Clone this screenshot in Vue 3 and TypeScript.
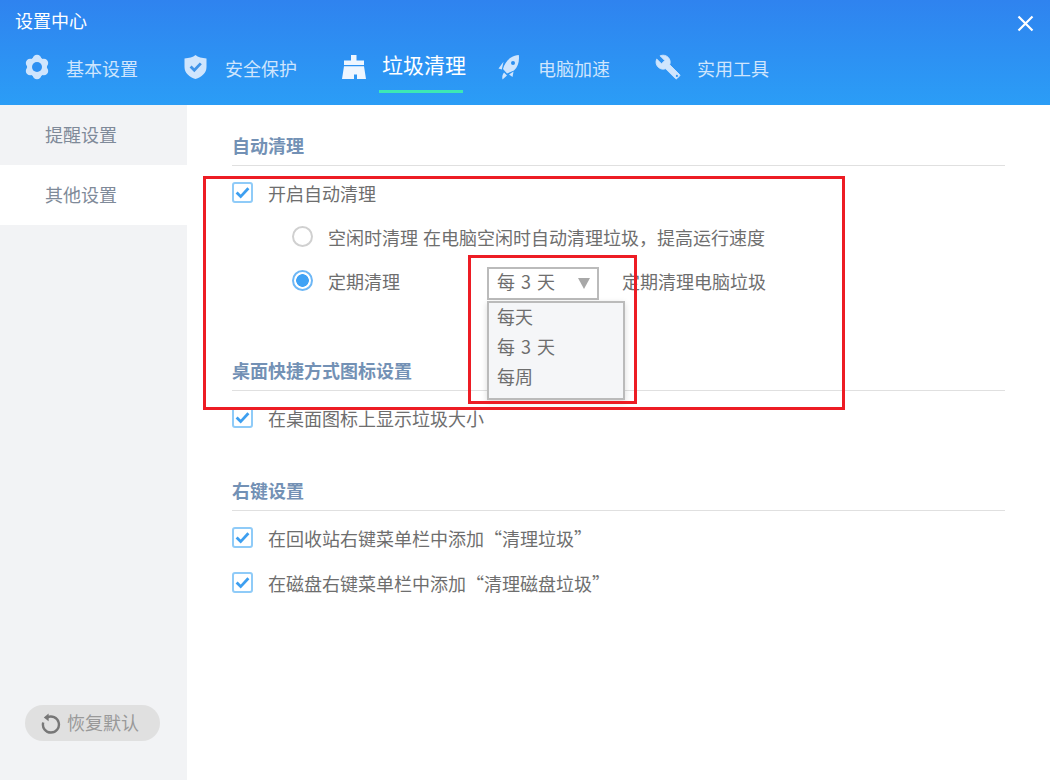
<script setup lang="ts">
import { ref } from 'vue'

const tabs = [
  { key: 'base', label: '基本设置' },
  { key: 'safe', label: '安全保护' },
  { key: 'clean', label: '垃圾清理' },
  { key: 'speed', label: '电脑加速' },
  { key: 'tool', label: '实用工具' }
]
const active = ref('clean')

const sideItems = ['提醒设置', '其他设置']
const current = ref('其他设置')

const options = ['每天', '每 3 天', '每周']
const period = ref('每 3 天')
const mode = ref('period')
</script>

<template>
  <div class="win">
    <header class="head">
      <div class="title-row">
        <span class="title">设置中心</span>
        <svg class="close" width="17" height="17" viewBox="0 0 17 17">
          <path d="M1.5 1.5 15.5 15.5M15.5 1.5 1.5 15.5" stroke="#fff" stroke-width="2.2" fill="none" />
        </svg>
      </div>
      <nav class="tabs">
        <div
          v-for="t in tabs"
          :key="t.key"
          class="tab"
          :class="['tab-' + t.key, { active: active === t.key }]"
          @click="active = t.key"
        >
          <span class="slot">
            <svg v-if="t.key === 'base'" width="26" height="26" viewBox="0 0 26 26">
              <g fill="currentColor">
                <circle cx="13" cy="13" r="10" />
                <circle cx="13" cy="5.2" r="4.4" />
                <circle cx="13" cy="20.8" r="4.4" />
                <circle cx="6.2" cy="9.1" r="4.4" />
                <circle cx="19.8" cy="9.1" r="4.4" />
                <circle cx="6.2" cy="16.9" r="4.4" />
                <circle cx="19.8" cy="16.9" r="4.4" />
              </g>
              <circle cx="13" cy="13" r="5" fill="#2e90f2" />
            </svg>
            <svg v-else-if="t.key === 'safe'" width="25" height="26" viewBox="0 0 25 26">
              <path d="M12.5 1 C15 3.2 19 4.2 23.5 4.4 V13 C23.5 19 18.5 23 12.5 25 C6.5 23 1.5 19 1.5 13 V4.4 C6 4.2 10 3.2 12.5 1 Z" fill="currentColor" />
              <path d="M7.6 12.6 11.3 16.3 17.8 9.4" fill="none" stroke="#3f93e8" stroke-width="2.8" />
            </svg>
            <svg v-else-if="t.key === 'clean'" width="24" height="26" viewBox="0 0 24 26">
              <path d="M9 1H14.5V6.5H22V11H2V6.5H9Z" fill="currentColor" />
              <path d="M2 12.2H22L24 25H15V20.5H12V25H0Z" fill="currentColor" />
            </svg>
            <svg v-else-if="t.key === 'speed'" width="22" height="26" viewBox="0 0 22 26">
              <path d="M20.8 1C21.6 7 20 13 16 16.5L9 19.5L5 15C6 10.5 9.5 5.5 13 3.5C15.5 2 18 1.3 20.8 1Z" fill="currentColor" />
              <path d="M5.5 7.8 0.5 14.5 3.8 15.5Z" fill="currentColor" />
              <path d="M15.5 17.5 14.5 23 11 20.5Z" fill="currentColor" />
              <path d="M6 18.5 9 21.5 4.5 25.5C3.8 23 4.5 20.5 6 18.5Z" fill="currentColor" />
              <circle cx="15" cy="9" r="2" fill="#2e8fef" />
            </svg>
            <svg v-else width="26" height="26" viewBox="0 0 24 24">
              <path d="M22.7 19l-9.1-9.1c.9-2.3.4-5-1.5-6.9-2-2-5-2.4-7.4-1.3L9 6 6 9 1.6 4.7C.4 7.1.9 10.1 2.9 12.1c1.9 1.9 4.6 2.4 6.9 1.5l9.1 9.1c.4.4 1 .4 1.4 0l2.3-2.3c.5-.4.5-1.1.1-1.4z" fill="currentColor" stroke="currentColor" stroke-width="0.8" />
              <circle cx="20.2" cy="20.2" r="1" fill="#2e96f4" />
            </svg>
          </span>
          <span class="tab-text">
            {{ t.label }}
            <i v-if="active === t.key" class="under"></i>
          </span>
        </div>
      </nav>
    </header>

    <div class="body">
      <aside class="side">
        <ul class="side-list">
          <li
            v-for="s in sideItems"
            :key="s"
            :class="{ on: current === s }"
            @click="current = s"
          >{{ s }}</li>
        </ul>
        <button class="reset">
          <svg width="20" height="21" viewBox="0 0 20 21">
            <path d="M6 4.6A8 8 0 1 1 2.2 9.5" fill="none" stroke="#777" stroke-width="2.4" />
            <path d="M7.6 0.5V8.2L2.8 4.4Z" fill="#777" />
          </svg>
          <span class="reset-text">恢复默认</span>
        </button>
      </aside>

      <main class="main">
        <section class="sec first">
          <h4>自动清理</h4>
          <div class="row">
            <span class="check"><svg width="15" height="13" viewBox="0 0 14 12"><path d="M1.5 6 5.3 9.8 12.5 2" fill="none" stroke="#3d9ff0" stroke-width="2.6" /></svg></span>
            开启自动清理
          </div>
          <div class="row sub tight" @click="mode = 'idle'">
            <span class="radio" :class="{ on: mode === 'idle' }"></span>
            <span class="idle-text">空闲时清理 在电脑空闲时自动清理垃圾，提高运行速度</span>
          </div>
          <div class="row sub" @click="mode = 'period'">
            <span class="radio" :class="{ on: mode === 'period' }"></span>
            <span class="period-label">定期清理</span>
            <div class="select">
              <span class="val">{{ period }}</span>
              <i class="arrow"></i>
              <ul class="menu">
                <li v-for="o in options" :key="o" @click.stop="period = o">{{ o }}</li>
              </ul>
            </div>
            <span class="period-tip">定期清理电脑垃圾</span>
          </div>
        </section>

        <section class="sec">
          <h4>桌面快捷方式图标设置</h4>
          <div class="row">
            <span class="check"><svg width="15" height="13" viewBox="0 0 14 12"><path d="M1.5 6 5.3 9.8 12.5 2" fill="none" stroke="#3d9ff0" stroke-width="2.6" /></svg></span>
            在桌面图标上显示垃圾大小
          </div>
        </section>

        <section class="sec">
          <h4>右键设置</h4>
          <div class="row">
            <span class="check"><svg width="15" height="13" viewBox="0 0 14 12"><path d="M1.5 6 5.3 9.8 12.5 2" fill="none" stroke="#3d9ff0" stroke-width="2.6" /></svg></span>
            在回收站右键菜单栏中添加“清理垃圾”
          </div>
          <div class="row">
            <span class="check"><svg width="15" height="13" viewBox="0 0 14 12"><path d="M1.5 6 5.3 9.8 12.5 2" fill="none" stroke="#3d9ff0" stroke-width="2.6" /></svg></span>
            在磁盘右键菜单栏中添加“清理磁盘垃圾”
          </div>
        </section>
      </main>
    </div>

    <div class="mark mark-outer"></div>
    <div class="mark mark-inner"></div>
  </div>
</template>

<style>
html,
body {
  margin: 0;
  background: #fff;
}
</style>

<style scoped>
.win {
  position: relative;
  width: 1050px;
  height: 780px;
  overflow: hidden;
  display: flex;
  flex-direction: column;
  font-family: "Noto Sans CJK SC", "Liberation Sans", sans-serif;
  font-size: 18px;
  color: #6e6e6e;
}

.head {
  height: 105px;
  flex: none;
  background: linear-gradient(180deg, #2f83ef, #2b9df6);
  color: #fff;
}

.title-row {
  height: 42px;
  display: flex;
  align-items: center;
  justify-content: space-between;
  padding: 0 16px 0 15px;
}

.title {
  font-size: 18px;
  line-height: 40px;
  margin-bottom: 2px;
}

.close {
  margin-top: 5px;
}

.tabs {
  display: flex;
  height: 50px;
  padding-left: 24px;
}

.tab {
  display: flex;
  align-items: center;
  color: #cfe5fd;
  margin-right: 45px;
  cursor: pointer;
}

.tab.active {
  color: #eef6ff;
  margin-right: 32px;
}

.slot {
  width: 42px;
  display: flex;
  align-items: center;
}

.tab-clean .slot,
.tab-speed .slot {
  width: 40px;
}

.tab-text {
  position: relative;
  display: block;
  line-height: 26px;
  margin-top: 2px;
}

.active .tab-text {
  font-size: 21px;
  line-height: 30px;
  color: #fff;
  margin-top: -6px;
}

.under {
  position: absolute;
  left: -3px;
  top: 41px;
  width: 84px;
  height: 3px;
  background: #3de8b4;
}

.body {
  flex: 1;
  display: flex;
  min-height: 0;
}

.side {
  width: 187px;
  flex: none;
  background: #f2f3f5;
  display: flex;
  flex-direction: column;
  justify-content: space-between;
  padding-bottom: 39px;
  box-sizing: border-box;
}

.side-list {
  list-style: none;
  margin: 0;
  padding: 0;
}

.side-list li {
  height: 60px;
  line-height: 58px;
  padding-left: 45px;
  color: #7f8a99;
  cursor: pointer;
}

.side-list li.on {
  background: #fff;
}

.reset {
  width: 135px;
  height: 36px;
  margin-left: 25px;
  border: none;
  border-radius: 18px;
  background: #e0e0e0;
  color: #999;
  font: inherit;
  display: flex;
  align-items: center;
  gap: 6px;
  padding: 0 0 0 16px;
}

.reset-text {
  line-height: 24px;
  margin-bottom: 3px;
}

.main {
  flex: 1;
  padding: 21px 45px 0;
}

.sec {
  margin-bottom: 30px;
}

.sec.first {
  margin-bottom: 47px;
}

h4 {
  margin: 0 0 5px;
  height: 39px;
  line-height: 38px;
  font-size: 18px;
  font-weight: 700;
  color: #7391b5;
  border-bottom: 1px solid #e0e0e0;
}

.row {
  height: 45px;
  box-sizing: border-box;
  padding-bottom: 2px;
  display: flex;
  align-items: center;
}

.row.tight {
  height: 43px;
}

.row.sub {
  padding-left: 60px;
}

.check {
  width: 21px;
  height: 21px;
  box-sizing: border-box;
  border: 2px solid #8fcbf8;
  border-radius: 3px;
  background: #fff;
  display: flex;
  align-items: center;
  justify-content: center;
  margin-right: 15px;
}

.radio {
  width: 21px;
  height: 21px;
  box-sizing: border-box;
  border: 2px solid #d0d0d0;
  border-radius: 50%;
  background: #fff;
  margin-right: 15px;
}

.radio.on {
  border-color: #6db7f6;
  background: radial-gradient(circle, #3fa2f5 0, #3fa2f5 6px, #fff 6.6px);
}

.idle-text {
  word-spacing: 1px;
}

.period-label {
  width: 159px;
}

.select {
  position: relative;
  width: 112px;
  height: 33px;
  box-sizing: border-box;
  border: 2px solid #bbb;
  padding-left: 8px;
  line-height: 24px;
  margin-top: 6px;
  background: #fff;
  word-spacing: 2px;
}

.arrow {
  position: absolute;
  right: 7px;
  top: 9px;
  width: 0;
  height: 0;
  border-style: solid;
  border-width: 11px 6px 0;
  border-color: #a8a8a8 transparent transparent;
}

.menu {
  position: absolute;
  left: -2px;
  top: 32px;
  width: 138px;
  height: 99px;
  box-sizing: border-box;
  margin: 0;
  padding: 0 0 0 8px;
  list-style: none;
  border: 2px solid #bbb;
  background: #f5f6f8;
  box-shadow: 0 2px 6px rgba(0, 0, 0, 0.15);
  z-index: 2;
}

.menu li {
  height: 30px;
  line-height: 27px;
  cursor: pointer;
}

.period-tip {
  margin-left: 23px;
}

.mark {
  position: absolute;
  box-sizing: border-box;
  border: 3px solid #ed1c24;
  pointer-events: none;
  z-index: 3;
}

.mark-outer {
  left: 203px;
  top: 176px;
  width: 642px;
  height: 234px;
}

.mark-inner {
  left: 468px;
  top: 255px;
  width: 169px;
  height: 149px;
}
</style>
